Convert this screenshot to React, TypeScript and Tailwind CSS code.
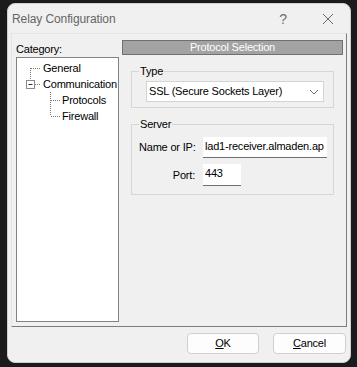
import React from "react"

function Dots({ d }: { d: string }) {
  return <path d={d} stroke="#7a7a7a" strokeWidth="1" strokeDasharray="1 1" fill="none" />
}

function TreeRow({ indent, label, children }: { indent: number; label: string; children: React.ReactNode }) {
  return (
    <div className="flex items-center h-[16px]">
      <svg width={indent} height="16" className="shrink-0">
        {children}
      </svg>
      <span className="leading-[16px]">{label}</span>
    </div>
  )
}

export default function App() {
  return (
    <div className="w-[357px] h-[367px] bg-[#1b1b1b] pt-[3px] pl-[7px] font-['Liberation_Sans',Arial,sans-serif] text-[11px] tracking-[-0.2px] text-black">
      <div className="w-[344px] h-[360px] bg-[#f0f0f0] rounded-[8px] border border-[#cfcfcf] flex flex-col">
        {/* title bar */}
        <div className="h-[29px] flex items-center pl-[4px] pt-[1px]">
          <span className="text-[12px] tracking-[-0.1px] text-[#656565] flex-1">Relay Configuration</span>
          <span className="text-[14px] text-[#707070] w-[12px] mr-[33px] text-center">?</span>
          <svg width="12" height="12" viewBox="0 0 12 12" className="mr-[16px]">
            <path d="M1 1 L11 11 M11 1 L1 11" stroke="#6a6a6a" strokeWidth="1" />
          </svg>
        </div>

        {/* page panel */}
        <div className="ml-[3px] w-[336px] h-[294px] border-l border-t border-l-[#e4e4e4] border-t-[#e4e4e4] border-r border-b border-r-[#7c7c7c] border-b-[#7c7c7c] flex pl-[4px] pt-[6px] pr-[3px] pb-[4px] gap-[3px]">
          {/* category tree */}
          <div className="w-[103px] flex flex-col">
            <div className="h-[17px] leading-[17px] pt-[1px]">Category:</div>
            <div className="flex-1 bg-white border border-[#828282] pt-[2px]">
              <TreeRow indent={26} label="General">
                <Dots d="M13.5 8 V16 M14 8.5 H24" />
              </TreeRow>
              <TreeRow indent={26} label="Communication">
                <Dots d="M13.5 0 V4" />
                <rect x="9.5" y="4.5" width="8" height="8" fill="white" stroke="#8a8a8a" />
                <path d="M11.5 8.5 H15.5" stroke="#333" strokeWidth="1" />
                <Dots d="M18 8.5 H24" />
              </TreeRow>
              <TreeRow indent={45} label="Protocols">
                <Dots d="M33.5 0 V16 M34 8.5 H43" />
              </TreeRow>
              <TreeRow indent={45} label="Firewall">
                <Dots d="M33.5 0 V8 M34 8.5 H43" />
              </TreeRow>
            </div>
          </div>

          {/* right side */}
          <div className="w-[221px] flex flex-col">
            <div className="h-[15px] bg-[#a3a3a3] border border-[#707070] text-white text-center leading-[13px]">
              Protocol Selection
            </div>

            <fieldset className="mx-[9px] mt-[10px] border border-[#d6d6d6] pt-[3px] pb-[5px]">
              <legend className="ml-[7px] px-[1px] leading-[13px]">Type</legend>
              <div className="ml-[14px] w-[178px] h-[21px] bg-white border border-[#d4d4d4] flex items-center pl-[2px] pr-[4px]">
                <span className="flex-1">SSL (Secure Sockets Layer)</span>
                <svg width="10" height="6" viewBox="0 0 10 6">
                  <path d="M1 1 L5 5 L9 1" stroke="#707070" strokeWidth="1" fill="none" />
                </svg>
              </div>
            </fieldset>

            <fieldset className="mx-[9px] mt-[10px] border border-[#d6d6d6] pt-[6px] pb-[8px]">
              <legend className="ml-[7px] px-[1px] leading-[13px]">Server</legend>
              <div className="flex items-center h-[21px]">
                <span className="w-[71px] pl-[7px]">Name or IP:</span>
                <div className="w-[124px] h-[21px] bg-white border-b border-[#6f6f6f] pl-[2px] leading-[19px] whitespace-nowrap overflow-hidden">
                  lad1-receiver.almaden.ap
                </div>
              </div>
              <div className="flex items-center h-[22px] mt-[6px]">
                <span className="w-[71px] text-right pr-[8px]">Port:</span>
                <div className="w-[38px] h-[22px] bg-white border-b border-[#6f6f6f] pl-[2px] leading-[19px]">443</div>
              </div>
            </fieldset>
          </div>
        </div>

        {/* buttons */}
        <div className="flex justify-end gap-[14px] mt-[6px] pr-[4px]">
          <button className="w-[72px] h-[21px] bg-[#fdfdfd] border border-[#d0d0d0] rounded-[4px] text-center leading-[19px]">
            <span className="underline">O</span>K
          </button>
          <button className="w-[73px] h-[21px] bg-[#fdfdfd] border border-[#d0d0d0] rounded-[4px] text-center leading-[19px]">
            <span className="underline">C</span>ancel
          </button>
        </div>
      </div>
    </div>
  )
}
